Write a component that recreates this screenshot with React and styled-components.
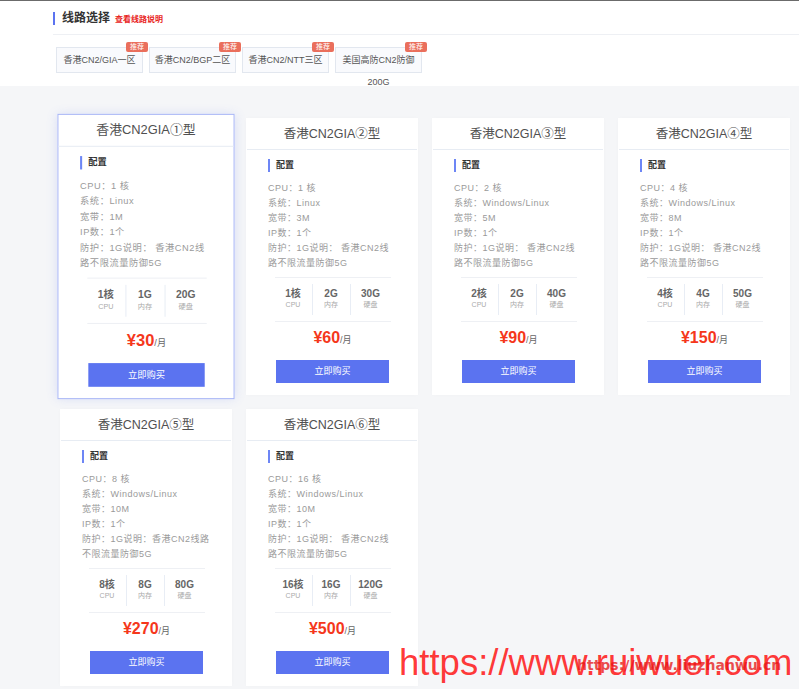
import React from 'react'
import styled, { createGlobalStyle } from 'styled-components'

const GlobalStyle = createGlobalStyle`
body {
    margin: 0;
    background: #f5f6f8;
    font-family: "Liberation Sans", "Noto Sans CJK SC", sans-serif;
}
`

const Page = styled.div`
position: relative;
min-height: 689px;
overflow: hidden;
`

const TopSection = styled.div`
background: #ffffff;
border-top: 1px solid #6b6b6b;
height: 85px;
padding-left: 53px;
`

const Header = styled.div`
display: flex;
align-items: center;
height: 14px;
padding-top: 10px;
`

const HeaderTitle = styled.div`
border-left: 2px solid #5b73f0;
padding-left: 7px;
font-size: 12px;
line-height: 13px;
font-weight: bold;
color: #333333;
`

const HeaderLink = styled.a`
margin-left: 5px;
font-size: 8px;
font-weight: bold;
color: #e8231c;
text-decoration: none;
`

const Divider = styled.div`
margin-top: 9px;
border-bottom: 1px solid #eef0f4;
`

const TabRow = styled.div`
display: flex;
gap: 6px;
margin-top: 12px;
padding-left: 3px;
`

const Tab = styled.div`
position: relative;
box-sizing: border-box;
width: 87px;
height: 26px;
padding: 1px 3px 0;
border: 1px solid #e2e7ef;
background: #f9fafd;
font-size: 9px;
line-height: 22px;
color: #555555;
text-align: center;
`

const Badge = styled.span`
position: absolute;
top: -6px;
right: -6px;
width: 22px;
height: 10px;
border-radius: 2px;
background: #ea6f5c;
color: #ffffff;
font-size: 7px;
line-height: 10px;
text-align: center;
`

const Grid = styled.div`
display: grid;
grid-template-columns: repeat(4, 172px);
gap: 14px;
padding: 32px 0 4px 60px;
`

const Card = styled.div`
box-sizing: border-box;
background: #ffffff;
border: 1px solid ${props => props.active ? '#a9b7f6' : '#ffffff'};
box-shadow: ${props => props.active ? '0 0 10px rgba(91, 115, 240, 0.18)' : '0 0 4px rgba(0, 0, 0, 0.02)'};
transform: ${props => props.active ? 'scale(1.03)' : 'none'};
`

const CardTitle = styled.div`
box-sizing: border-box;
height: 31px;
padding-bottom: 3px;
border-bottom: 1px solid #e7ecf3;
display: flex;
align-items: center;
justify-content: center;
font-size: 12.5px;
color: #505050;
`

const CardBody = styled.div`
padding: 9px 20px 11px 21px;
`

const SectionHead = styled.div`
border-left: 2px solid #6d86f5;
padding-left: 6px;
font-size: 9px;
line-height: 13px;
font-weight: bold;
color: #333333;
margin-bottom: 9px;
`

const SpecList = styled.div`
font-size: 9px;
line-height: 15px;
letter-spacing: 0.5px;
color: #9a9a9a;
`

const Stats = styled.div`
display: grid;
grid-template-columns: 37px 38px 1fr;
width: 116px;
margin: 6px auto 0;
padding: 6px 0;
border-top: 1px solid #eef0f4;
border-bottom: 1px solid #eef0f4;
`

const Stat = styled.div`
height: 31px;
box-sizing: border-box;
padding-top: 4px;
text-align: center;
border-left: ${props => props.first ? 'none' : '1px solid #e8edf5'};
`

const StatValue = styled.div`
font-size: 10px;
line-height: 12px;
font-weight: bold;
color: #666666;
`

const StatLabel = styled.div`
font-size: 7px;
line-height: 10px;
color: #aaaaaa;
`

const Price = styled.div`
height: 20px;
margin-top: 6px;
display: flex;
align-items: baseline;
justify-content: center;
font-size: 9px;
line-height: 20px;
color: #666666;
& strong {
    font-size: 16px;
    line-height: 20px;
    color: #f5371b;
}
`

const BuyButton = styled.div`
width: 113px;
height: 23px;
margin: 12px auto 0;
background: #5b73f0;
color: #ffffff;
font-size: 9px;
line-height: 23px;
text-align: center;
cursor: pointer;
`

const Watermark = styled.div`
position: absolute;
left: 399px;
top: 645px;
font-family: "Liberation Sans", sans-serif;
font-size: 36.5px;
line-height: 36px;
color: rgba(255, 30, 30, 0.9);
white-space: nowrap;
`

const SmallMark = styled.div`
position: absolute;
left: 577px;
top: 657px;
font-family: "DejaVu Sans", sans-serif;
font-size: 14px;
font-weight: bold;
color: rgba(230, 20, 20, 0.75);
white-space: nowrap;
`

const tabs = ['香港CN2/GIA一区', '香港CN2/BGP二区', '香港CN2/NTT三区', '美国高防CN2防御200G']

const plans = [
    { name: '香港CN2GIA①型', cpu: '1', os: 'Linux', bw: '1M', note: '香港CN2线路不限流量防御5G', ram: '1G', disk: '20G', price: '30' },
    { name: '香港CN2GIA②型', cpu: '1', os: 'Linux', bw: '3M', note: '香港CN2线路不限流量防御5G', ram: '2G', disk: '30G', price: '60' },
    { name: '香港CN2GIA③型', cpu: '2', os: 'Windows/Linux', bw: '5M', note: '香港CN2线路不限流量防御5G', ram: '2G', disk: '40G', price: '90' },
    { name: '香港CN2GIA④型', cpu: '4', os: 'Windows/Linux', bw: '8M', note: '香港CN2线路不限流量防御5G', ram: '4G', disk: '50G', price: '150' },
    { name: '香港CN2GIA⑤型', cpu: '8', os: 'Windows/Linux', bw: '10M', note: '香港CN2线路不限流量防御5G', ram: '8G', disk: '80G', price: '270', tight: true },
    { name: '香港CN2GIA⑥型', cpu: '16', os: 'Windows/Linux', bw: '10M', note: '香港CN2线路不限流量防御5G', ram: '16G', disk: '120G', price: '500' },
]

const App = () => {
    return (
        <Page>
            <GlobalStyle />
            <TopSection>
                <Header>
                    <HeaderTitle>线路选择</HeaderTitle>
                    <HeaderLink>查看线路说明</HeaderLink>
                </Header>
                <Divider />
                <TabRow>
                    {tabs.map(t => (
                        <Tab key={t}>
                            {t}
                            <Badge>推荐</Badge>
                        </Tab>
                    ))}
                </TabRow>
            </TopSection>
            <Grid>
                {plans.map((p, i) => (
                    <Card key={p.name} active={i === 0}>
                        <CardTitle>{p.name}</CardTitle>
                        <CardBody>
                            <SectionHead>配置</SectionHead>
                            <SpecList>
                                <div>CPU：{p.cpu} 核</div>
                                <div>系统：{p.os}</div>
                                <div>宽带：{p.bw}</div>
                                <div>IP数：1个</div>
                                <div>防护：1G说明：{p.tight ? '' : ' '}{p.note}</div>
                            </SpecList>
                            <Stats>
                                <Stat first>
                                    <StatValue>{p.cpu}核</StatValue>
                                    <StatLabel>CPU</StatLabel>
                                </Stat>
                                <Stat>
                                    <StatValue>{p.ram}</StatValue>
                                    <StatLabel>内存</StatLabel>
                                </Stat>
                                <Stat>
                                    <StatValue>{p.disk}</StatValue>
                                    <StatLabel>硬盘</StatLabel>
                                </Stat>
                            </Stats>
                            <Price><strong>¥{p.price}</strong>/月</Price>
                            <BuyButton>立即购买</BuyButton>
                        </CardBody>
                    </Card>
                ))}
            </Grid>
            <Watermark>https://www.ruiwuer.com</Watermark>
            <SmallMark>https://www.liuzhanwu.cn</SmallMark>
        </Page>
    )
}

export default App
